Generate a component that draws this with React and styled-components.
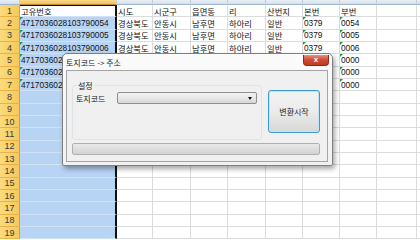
import React from 'react'
import styled, { createGlobalStyle, css } from 'styled-components'

const GlobalStyle = createGlobalStyle`
  html, body {
    margin: 0;
    padding: 0;
    background: #ffffff;
  }
  body {
    font-family: "Liberation Sans", "Noto Sans CJK KR", sans-serif;
  }
`

const Page = styled.div`
  position: relative;
  width: 420px;
  height: 240px;
  overflow: hidden;
  background: #ffffff;
`

const Sheet = styled.div`
  display: grid;
  grid-template-columns: 20px 97px 36px 38px 37px 38px 37px 37px 37px 40px 23px;
  grid-template-rows: 5px repeat(19, 12.33px);
`

const ColHead = styled.div`
  background: linear-gradient(#e9eef5, #d5dfeb);
  border-right: 1px solid #c5cfdb;
  border-bottom: 1px solid #9eb6ce;
  ${(p) => p.$sel && css`
    background: linear-gradient(#f9d98a, #f1c15f);
    border-bottom-color: #c28a30;
  `}
`

const RowHead = styled.div`
  background: linear-gradient(90deg, #fbdb7c, #f6c95a);
  border-right: 1px solid #d79f3c;
  border-bottom: 1px solid #e9b04c;
  box-sizing: border-box;
  display: flex;
  align-items: center;
  justify-content: center;
  font-size: 9px;
  color: #3b3b3b;
`

const Cell = styled.div`
  box-sizing: border-box;
  position: relative;
  border-right: 1px solid #dadcdd;
  border-bottom: 1px solid #dadcdd;
  display: flex;
  align-items: center;
  padding-left: 1px;
  font-size: 8.3px;
  color: #111;
  white-space: nowrap;
  overflow: hidden;
  ${(p) => p.$sel && css`
    background: #b8d4f4;
    border-bottom-color: #d2e1f3;
    border-right: 2px solid #111;
  `}
  ${(p) => p.$active && css`
    background: #ffffff;
    border-top: 1px solid #111;
  `}
  ${(p) => p.$text && css`
    &::before {
      content: '';
      position: absolute;
      left: 0;
      top: 0;
      border-top: 3px solid #1d9a3a;
      border-right: 3px solid transparent;
    }
  `}
`

const Dialog = styled.div`
  position: absolute;
  left: 62px;
  top: 53px;
  width: 271px;
  height: 113px;
  box-sizing: border-box;
  display: flex;
  flex-direction: column;
  background: linear-gradient(#fbfbfb, #f1f1f1);
  border: 1px solid #7f7f7f;
  border-radius: 5px 5px 2px 2px;
  box-shadow: 2px 3px 5px rgba(0, 0, 0, 0.35);
  font-family: "Noto Sans CJK KR", "Liberation Sans", sans-serif;
`

const TitleBar = styled.div`
  height: 16px;
  display: flex;
  align-items: center;
  justify-content: space-between;
  padding: 0 3px 0 3px;
  font-size: 8px;
  color: #222;
`

const CloseBtn = styled.div`
  width: 26px;
  height: 11px;
  margin-top: -4px;
  box-sizing: border-box;
  border: 1px solid #8a2a1e;
  border-top: none;
  border-radius: 0 0 4px 4px;
  background: linear-gradient(#e8917f, #cf4a33 50%, #c23a24);
  color: #fff;
  font-family: "Liberation Sans", sans-serif;
  font-size: 8px;
  font-weight: bold;
  display: flex;
  align-items: center;
  justify-content: center;
`

const Client = styled.div`
  flex: 1;
  margin: 0 4px 3px 3px;
  box-sizing: border-box;
  border: 1px solid #a4a4a4;
  background: #f0f0f0;
  padding: 9px 7px 6px 5px;
  display: flex;
  flex-direction: column;
  gap: 3px;
`

const TopRow = styled.div`
  display: flex;
  gap: 6px;
`

const Group = styled.fieldset`
  margin: 0;
  width: 190px;
  height: 60px;
  box-sizing: border-box;
  border: 1px solid #dde5ea;
  border-radius: 3px;
  padding: 1px 4px 0 3px;
  font-size: 8px;
  color: #222;
  legend {
    padding: 0 1px;
    margin-left: 1px;
    font-size: 8px;
  }
`

const FieldRow = styled.div`
  display: flex;
  align-items: center;
  justify-content: space-between;
`

const Combo = styled.div`
  width: 140px;
  height: 12px;
  box-sizing: border-box;
  border: 1px solid #8e8f8f;
  border-radius: 2px;
  background: linear-gradient(#f3f3f3, #e8e8e8 50%, #d6d6d6);
  display: flex;
  align-items: center;
  justify-content: flex-end;
  padding-right: 4px;
`

const Arrow = styled.span`
  border-left: 2.5px solid transparent;
  border-right: 2.5px solid transparent;
  border-top: 3px solid #111;
`

const ActionBtn = styled.div`
  margin-top: 10px;
  width: 52px;
  height: 43px;
  box-sizing: border-box;
  border: 1px solid #3c9bd7;
  border-radius: 3px;
  background: linear-gradient(#f4f4f4, #ebebeb 50%, #d8d8d8);
  box-shadow: inset 0 0 0 1px #bfe3f7;
  display: flex;
  align-items: center;
  justify-content: center;
  font-size: 8px;
  color: #222;
`

const Progress = styled.div`
  height: 12px;
  box-sizing: border-box;
  border: 1px solid #b0b0b0;
  border-radius: 2px;
  background: linear-gradient(#e9e9e9, #d2d2d2);
`

const rows = [
  ['고유번호', '시도', '시군구', '읍면동', '리', '산번지', '본번', '부번'],
  ['4717036028103790054', '경상북도', '안동시', '남후면', '하아리', '일반', '0379', '0054'],
  ['4717036028103790005', '경상북도', '안동시', '남후면', '하아리', '일반', '0379', '0005'],
  ['4717036028103790006', '경상북도', '안동시', '남후면', '하아리', '일반', '0379', '0006'],
  ['471703602', '', '', '', '', '', '', '0000'],
  ['471703602', '', '', '', '', '', '', '0000'],
  ['471703602', '', '', '', '', '', '', '0000'],
]

const App = () => {
  const cells = []
  for (let i = 0; i < 11; i++) {
    cells.push(<ColHead key={`h${i}`} $sel={i === 1} />)
  }
  for (let r = 0; r < 19; r++) {
    cells.push(<RowHead key={`r${r}`}>{r + 1}</RowHead>)
    const data = rows[r] || []
    for (let c = 0; c < 10; c++) {
      const value = c < 8 ? data[c] : ''
      const isText = r > 0 && r < 7 && (c === 0 || c === 6 || c === 7)
      cells.push(
        <Cell
          key={`c${r}-${c}`}
          $sel={c === 0}
          $active={c === 0 && r === 0}
          $text={isText}
        >
          {value}
        </Cell>
      )
    }
  }

  return (
    <Page>
      <GlobalStyle />
      <Sheet>{cells}</Sheet>
      <Dialog>
        <TitleBar>
          <span>토지코드 -&gt; 주소</span>
          <CloseBtn>x</CloseBtn>
        </TitleBar>
        <Client>
          <TopRow>
            <Group>
              <legend>설정</legend>
              <FieldRow>
                <span>토지코드</span>
                <Combo><Arrow /></Combo>
              </FieldRow>
            </Group>
            <ActionBtn>변환시작</ActionBtn>
          </TopRow>
          <Progress />
        </Client>
      </Dialog>
    </Page>
  )
}

export default App
